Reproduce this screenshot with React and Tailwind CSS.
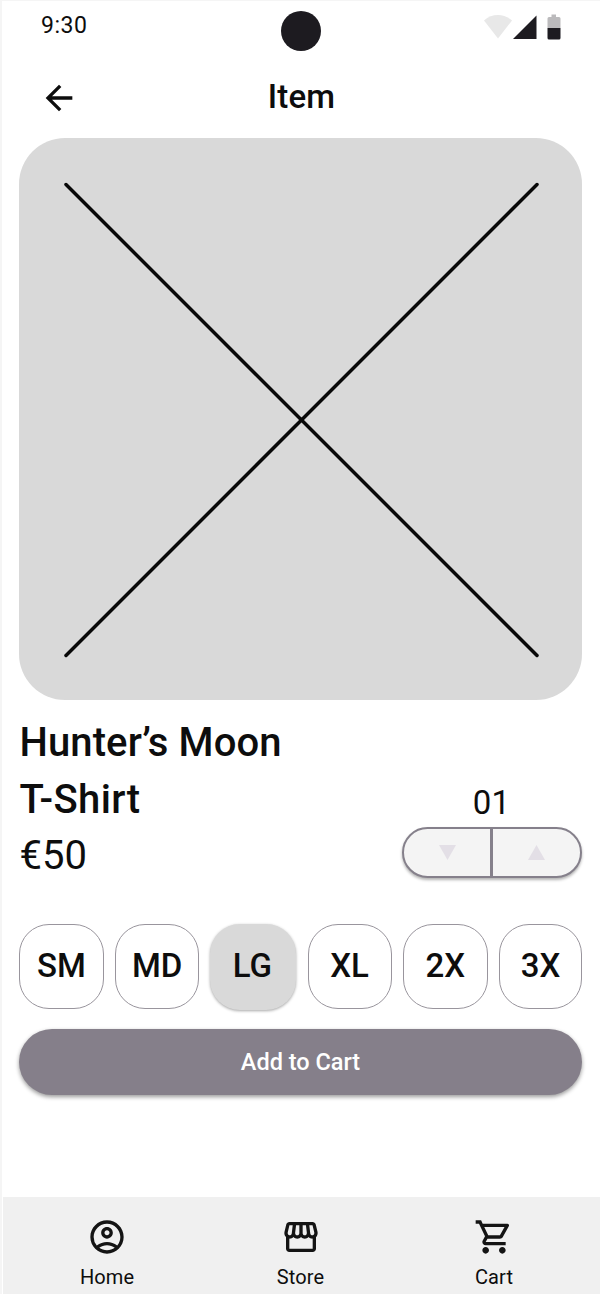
import React from 'react';
import { MdArrowBack, MdOutlineAccountCircle, MdOutlineStorefront, MdOutlineShoppingCart } from 'react-icons/md';

const SIZES = [
  { label: 'SM', box: 'w-[85px]' },
  { label: 'MD', box: 'w-[84px]' },
  { label: 'LG', box: 'w-[86px]' },
  { label: 'XL', box: 'w-[84px]' },
  { label: '2X', box: 'w-[85px]' },
  { label: '3X', box: 'w-[83px]' },
];

function StatusBar() {
  return (
    <div className="flex h-[63px] items-start justify-between pl-[39px] pr-[39px]">
      <div className="w-[77px] pt-[11px] text-[23px] leading-[28px] tracking-[0.5px]">9:30</div>
      <div className="mt-[10px] size-10 rounded-full bg-[#1d1b20]" />
      <svg className="mt-[13px] h-[26px] w-[77px]" viewBox="0 0 77 26">
        <path d="M0 6.500C8 -.7 20 -.7 28 6.500L14 24.500Z" fill="#e8e8e8" />
        <path d="M29 25H52.500V1.500Z" fill="#1d1b20" />
        <path d="M67.500 .5h4.500v2.500h3q1.500 0 1.500 1.500V14H63.500V4.500Q63.500 3 65 3H67.500Z" fill="#bbbabc" />
        <path d="M63.500 14h13v10q0 1.500-1.500 1.500H65Q63.500 25.500 63.500 24Z" fill="#1d1b20" />
      </svg>
    </div>
  );
}

function NavItem({ icon: Icon, label, className }) {
  return (
    <button className={'flex flex-col items-center ' + className}>
      <Icon className="size-10 text-[#141414]" />
      <span className="mt-[7px] text-[20px] leading-[26px] tracking-[0.1px]">{label}</span>
    </button>
  );
}

export default function App() {
  return (
    <div className="flex h-[1294px] w-[600px] flex-col overflow-hidden border-l-2 border-t border-[#f5f5f5] bg-white font-['Roboto',sans-serif] text-[#0d0d0d]">
      <StatusBar />
      <header className="grid h-[74px] grid-cols-[1fr_auto_1fr] items-center pl-[37px] pr-[36px]">
        <MdArrowBack className="mb-[7px] size-10" />
        <h1 className="mb-[9px] text-[33px] font-medium leading-10 tracking-[0.2px]">Item</h1>
      </header>

      <main className="flex flex-1 flex-col pl-[17px] pr-[18px]">
        <div className="h-[562px] w-[563px] shrink-0 rounded-[46px] bg-[#d9d9d9]">
          <svg className="size-full" viewBox="0 0 563 562">
            <path d="M47 46.500L518 517.500M518 46.500L47 517.500" stroke="#080808" strokeWidth="3.500" strokeLinecap="round" />
          </svg>
        </div>

        <div className="flex h-[224px] justify-between pt-[15px]">
          <div className="pl-[0.5px] text-[40px] leading-[56.500px]">
            <h2 className="font-medium tracking-[0.1px]">
              Hunter’s Moon
              <span className="block tracking-[0.4px]">T-Shirt</span>
            </h2>
            <p>€50</p>
          </div>
          <div className="flex w-[180px] flex-col pt-[67px]">
            <div className="pr-px text-center text-[33px] leading-[42px] tracking-[0.3px]">01</div>
            <div className="mt-[3px] flex h-[51px] overflow-hidden rounded-full border-2 border-[#85808b] bg-[#f4f4f4] shadow-[0_2px_3px_rgba(0,0,0,0.3)]">
              <button className="flex flex-1 items-center justify-center border-r-[3px] border-[#85808b]">
                <svg className="size-[17px]" viewBox="0 0 17 17"><path d="M0 1h17L8.500 16Z" fill="#e3dfe6" /></svg>
              </button>
              <button className="flex w-[87px] items-center justify-center">
                <svg className="size-[17px]" viewBox="0 0 17 17"><path d="M0 16h17L8.500 1Z" fill="#e3dfe6" /></svg>
              </button>
            </div>
          </div>
        </div>

        <div className="flex h-[86px] items-start justify-between">
          {SIZES.map(({ label, box }) => (
            <button
              key={label}
              className={
                'flex items-center justify-center rounded-[30px] text-[33px] font-medium leading-none ' + box +
                (label === 'LG'
                  ? ' h-[86px] bg-[#d9d9d9] pb-[4px] pr-[2px] shadow-[0_1px_3px_rgba(0,0,0,0.35)]'
                  : ' h-[85px] border border-[#99959d] pb-[3px]')
              }
            >
              {label}
            </button>
          ))}
        </div>

        <button className="mt-[19px] h-[66px] shrink-0 rounded-full bg-[#857f8a] pt-[2px] text-[23.500px] font-medium text-white shadow-[0_2px_4px_rgba(0,0,0,0.4)]">
          Add to Cart
        </button>
      </main>

      <nav className="ml-px flex h-[97px] justify-between bg-[#f0f0f0] pl-[55px] pr-[57px] pt-[20px]">
        <NavItem icon={MdOutlineAccountCircle} label="Home" className="w-[98px]" />
        <NavItem icon={MdOutlineStorefront} label="Store" className="w-[98px]" />
        <NavItem icon={MdOutlineShoppingCart} label="Cart" className="w-[98px]" />
      </nav>
    </div>
  );
}
